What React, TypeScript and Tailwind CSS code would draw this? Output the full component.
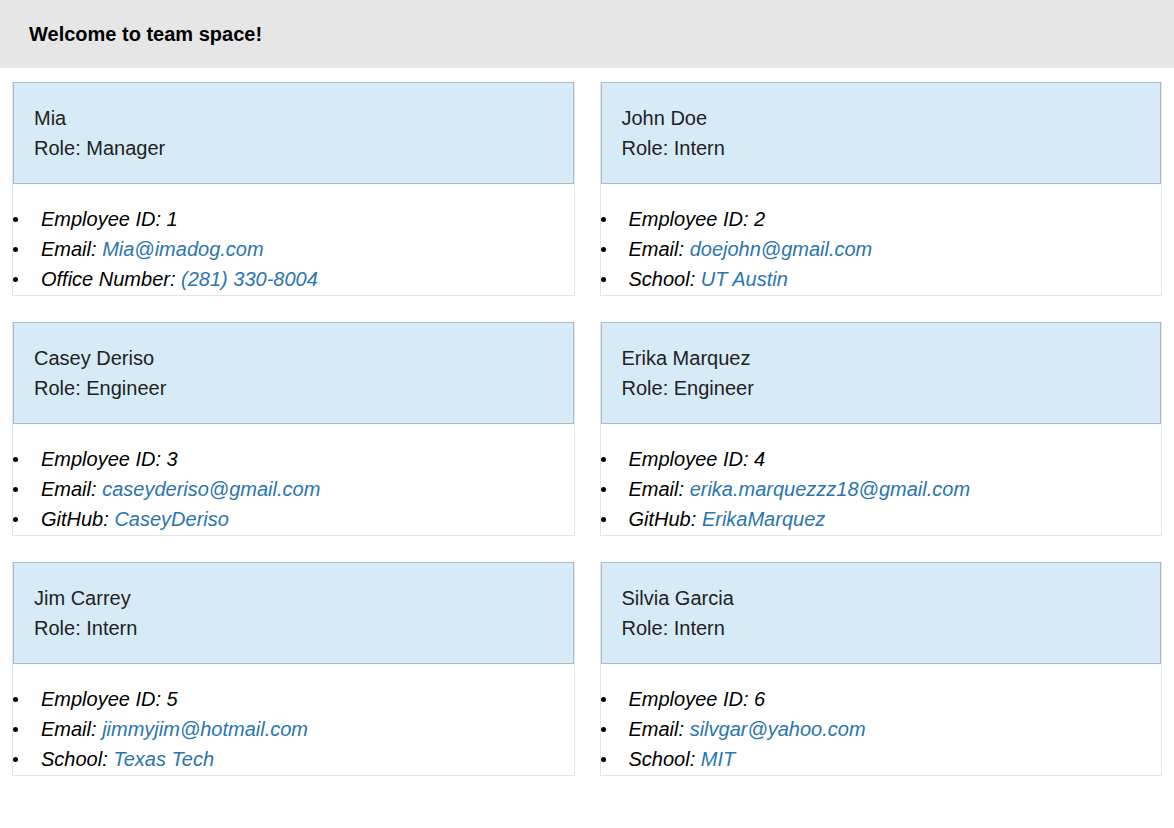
import React from 'react';

type Member = {
  name: string;
  role: string;
  id: number;
  email: string;
  extraLabel: string;
  extraValue: string;
};

const team: Member[] = [
  { name: 'Mia', role: 'Manager', id: 1, email: 'Mia@imadog.com', extraLabel: 'Office Number', extraValue: '(281) 330-8004' },
  { name: 'John Doe', role: 'Intern', id: 2, email: 'doejohn@gmail.com', extraLabel: 'School', extraValue: 'UT Austin' },
  { name: 'Casey Deriso', role: 'Engineer', id: 3, email: 'caseyderiso@gmail.com', extraLabel: 'GitHub', extraValue: 'CaseyDeriso' },
  { name: 'Erika Marquez', role: 'Engineer', id: 4, email: 'erika.marquezzz18@gmail.com', extraLabel: 'GitHub', extraValue: 'ErikaMarquez' },
  { name: 'Jim Carrey', role: 'Intern', id: 5, email: 'jimmyjim@hotmail.com', extraLabel: 'School', extraValue: 'Texas Tech' },
  { name: 'Silvia Garcia', role: 'Intern', id: 6, email: 'silvgar@yahoo.com', extraLabel: 'School', extraValue: 'MIT' },
];

const Item: React.FC<{ label: string; value?: string }> = ({ label, value }) => (
  <li className="relative pl-[28px]">
    <span className="absolute left-0 top-[13px] h-[5px] w-[5px] rounded-full bg-black" />
    {label}
    {value && <span className="text-[#2a75b0]"> {value}</span>}
  </li>
);

const MemberCard: React.FC<{ member: Member }> = ({ member }) => (
  <div className="flex flex-col border border-[#e4e4e4]">
    <div className="-mt-px border border-[#a9bac8] bg-[#d6eaf8] px-5 py-5 text-[20px] leading-[30px] text-[#222]">
      <div>{member.name}</div>
      <div>Role: {member.role}</div>
    </div>
    <ul className="pb-px pt-5 text-[20px] italic leading-[30px] text-black">
      <Item label={`Employee ID: ${member.id}`} />
      <Item label="Email:" value={member.email} />
      <Item label={`${member.extraLabel}:`} value={member.extraValue} />
    </ul>
  </div>
);

export default function App() {
  return (
    <div className="min-h-screen bg-white font-['Liberation_Sans',Arial,sans-serif]">
      <header className="flex h-[68px] items-center bg-[#e6e6e6] pl-[29px] text-[20px] font-bold text-black">
        Welcome to team space!
      </header>
      <main className="grid grid-cols-2 gap-x-[25px] gap-y-[26px] pl-3 pr-3 pt-[14px]">
        {team.map((m) => (
          <MemberCard key={m.id} member={m} />
        ))}
      </main>
    </div>
  );
}
